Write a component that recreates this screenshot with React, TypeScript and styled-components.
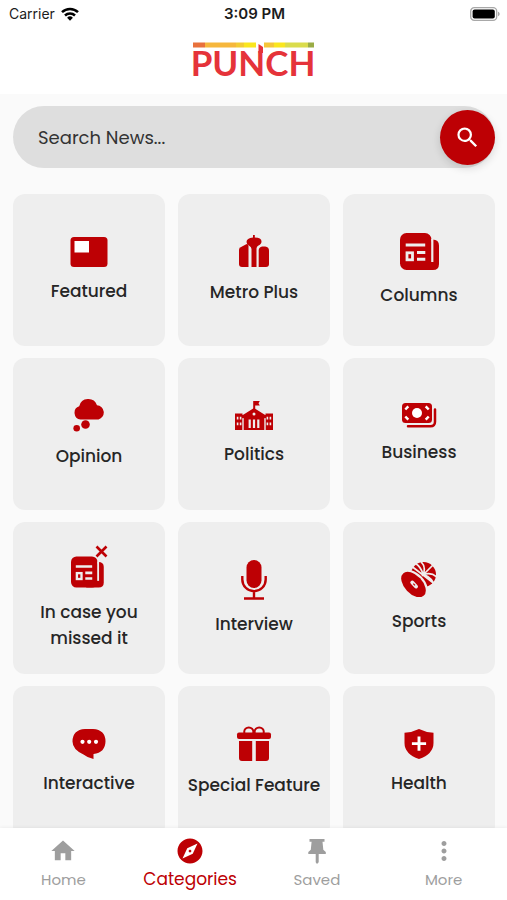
import React from "react";
import styled, { createGlobalStyle } from "styled-components";
import { MdExplore, MdMoreVert, MdSearch } from "react-icons/md";

const RED = "#bd0004";
const CARD = "#eeeeee";

const GlobalStyle = createGlobalStyle`
  *, *::before, *::after { box-sizing: border-box; }
  body { margin: 0; background: #fafafa; font-family: Poppins, Inter, sans-serif; }
  button, input { font: inherit; }
`;

const Screen = styled.div`
  display: flex;
  flex-direction: column;
  height: 100vh;
  background: #fafafa;
  color: #262626;
`;

const TopBar = styled.header`
  flex: none;
  background: #ffffff;
  padding-bottom: 8px;
`;

const StatusBar = styled.div`
  display: grid;
  grid-template-columns: 1fr auto 1fr;
  align-items: center;
  height: 28px;
  padding: 0 7px 0 9px;
  font-family: Inter, sans-serif;
  font-size: 14px;
  line-height: 20px;
  color: #1c1c1c;
`;

const Carrier = styled.span`
  display: flex;
  align-items: center;
  gap: 6px;
`;

const Clock = styled.time`
  font-weight: 600;
  font-size: 15px;
`;

const Battery = styled.span`
  display: flex;
  justify-content: flex-end;
`;

const Brand = styled.h1`
  display: flex;
  justify-content: center;
  margin: 12px 0 0;
`;

const Content = styled.main`
  flex: 1;
  min-height: 0;
  overflow-y: auto;
  scrollbar-width: none;
  padding: 12px 12px 12px 13px;
`;

const SearchForm = styled.form`
  display: flex;
  align-items: center;
  height: 62px;
  margin-bottom: 26px;
  border-radius: 31px;
  background: #dedede;
`;

const SearchInput = styled.input`
  flex: 1;
  min-width: 0;
  height: 100%;
  padding: 0 16px 0 25px;
  border: 0;
  outline: 0;
  background: transparent;
  font-size: 18px;
  color: #333333;
  &::placeholder {
    color: #333333;
    opacity: 1;
  }
`;

const SearchButton = styled.button`
  display: grid;
  place-items: center;
  flex: none;
  width: 55px;
  height: 55px;
  padding: 0;
  border: 0;
  border-radius: 50%;
  background: ${RED};
  color: #ffffff;
  box-shadow: 0 3px 8px rgba(0, 0, 0, 0.14);
  cursor: pointer;
`;

const CategoryGrid = styled.div`
  display: grid;
  grid-template-columns: repeat(3, minmax(0, 1fr));
  gap: 12px 13px;
`;

const CategoryCard = styled.a`
  display: flex;
  flex-direction: column;
  align-items: center;
  justify-content: center;
  gap: 11px;
  aspect-ratio: 1;
  border-radius: 12px;
  background: ${CARD};
  color: inherit;
  text-decoration: none;
  svg {
    display: block;
    flex: none;
  }
`;

const CategoryLabel = styled.span`
  max-width: 136px;
  font-size: 17px;
  font-weight: 500;
  line-height: 26px;
  text-align: center;
`;

const TabBar = styled.nav`
  flex: none;
  display: grid;
  grid-template-columns: repeat(4, 1fr);
  height: 72px;
  background: #ffffff;
  box-shadow: 0 -1px 3px rgba(0, 0, 0, 0.05);
`;

const Tab = styled.a<{ $active?: boolean }>`
  display: flex;
  flex-direction: column;
  align-items: center;
  padding-top: 8px;
  color: ${(p) => (p.$active ? RED : "#9e9e9e")};
  font-size: ${(p) => (p.$active ? 17 : 15)}px;
  line-height: ${(p) => (p.$active ? 26 : 28)}px;
  text-decoration: none;
`;

const TabIcon = styled.span`
  display: grid;
  place-items: center;
  height: 30px;
  svg {
    display: block;
  }
`;

type IconProps = { w: number; h: number; children: React.ReactNode };

const Icon = ({ w, h, children }: IconProps) => (
  <svg width={w} height={h} viewBox={`0 0 ${w} ${h}`} fill={RED} aria-hidden="true">
    {children}
  </svg>
);

const WifiIcon = () => (
  <svg width="18" height="14" viewBox="0 0 18 14" fill="none" stroke="#000" strokeWidth="2.5" aria-hidden="true">
    <path d="M1 5.2a11.5 11.5 0 0 1 16 0" />
    <path d="M4 8.5a7.2 7.2 0 0 1 10 0" />
    <path d="M6.1 10.7a4.2 4.2 0 0 1 5.8 0L9 13.8z" fill="#000" stroke="none" />
  </svg>
);

const BatteryIcon = () => (
  <svg width="30" height="14" viewBox="0 0 30 14" aria-hidden="true">
    <rect x=".7" y=".7" width="26" height="12.6" rx="3.6" fill="#fff" stroke="#a8a8a8" strokeWidth="1.3" />
    <rect x="2.6" y="2.5" width="22.2" height="9" rx="2" fill="#000" />
    <path d="M28 4.8c2.2.7 2.2 3.7 0 4.4z" fill="#a8a8a8" />
  </svg>
);

const PunchLogo = () => (
  <svg width="140" height="46" viewBox="-8 0 140 46" role="img" aria-label="Punch">
    <rect x="1" y="2.500" width="12" height="5" fill="#e8713c" />
    <rect x="13" y="2.500" width="31" height="5" fill="#f6b73c" />
    <rect x="44" y="2.500" width="8" height="5" fill="#f3cb35" />
    <rect x="52" y="2.500" width="12" height="5" fill="#fae61e" />
    <rect x="72" y="2.500" width="10" height="5" fill="#f5c63a" />
    <rect x="82" y="2.500" width="11" height="5" fill="#fae61e" />
    <rect x="93" y="2.500" width="23" height="5" fill="#dadc4c" />
    <rect x="116" y="2.500" width="6" height="5" fill="#9aac45" />
    <path d="M66.500 4l4.500 3v6h-4.500z" fill="#e5333a" />
    <text x="61" y="36" textAnchor="middle" fontFamily="Lato, sans-serif" fontWeight="700" fontSize="35" fill="#e5333a">
      PUNCH
    </text>
  </svg>
);

const FeaturedIcon = () => (
  <Icon w={38} h={30}>
    <rect x=".5" width="37" height="30" rx="3.500" />
    <rect x="4.500" y="4" width="14.500" height="11.500" fill="#fff" />
  </Icon>
);

const MetroIcon = () => (
  <Icon w={32} h={33}>
    <path d="M1 15q0-1.500 1.200-2.400l6-3.300q2-.8 2.300 1.500V32H4q-3 0-3-3z" />
    <path d="M15 0h1.800v2.500q6.700.2 6.700 3.700 0 3-3 4.300-2 .8-2 3V32h-5V14q-.2-2-2-3-3-1.500-3-4Q8.500 3 15 2.500z" />
    <path d="M20.700 15q.2-3 3.500-3.500h3q3.800.5 3.800 4V29q0 3-3 3h-7.300z" />
  </Icon>
);

const Newspaper = () => (
  <>
    <path d="M32.500 6.500q6.500 0 6.500 6V31q0 6-6 6H18z" />
    <rect width="31.500" height="37" rx="6.500" />
    <path d="M32.300 6v23" stroke={CARD} strokeWidth="2.200" />
    <path d="M5.700 12h19.500M17 19.500h8.300M17 26.300h8.300" stroke={CARD} strokeWidth="3" />
    <rect x="7" y="19.800" width="5.500" height="7" fill="none" stroke={CARD} strokeWidth="2.800" />
  </>
);

const ColumnsIcon = () => (
  <Icon w={39} h={38}>
    <Newspaper />
  </Icon>
);

const MissedIcon = () => (
  <Icon w={38} h={43}>
    <g transform="translate(1 11.500) scale(.84)">
      <Newspaper />
    </g>
    <path d="M26.500 1.500l10 10M36.500 1.500l-10 10" fill="none" stroke={RED} strokeWidth="2.600" />
  </Icon>
);

const OpinionIcon = () => (
  <Icon w={32} h={33}>
    <path d="M7.500 20.500A6.800 6.800 0 0 1 6.200 7.300 9.300 9.300 0 0 1 24 6.200a7.300 7.300 0 0 1 1.500 14.300z" />
    <circle cx="12.500" cy="25.500" r="4.300" />
    <circle cx="3.700" cy="29.300" r="3.300" />
  </Icon>
);

const PoliticsIcon = () => (
  <Icon w={38} h={29}>
    <path d="M18.200 0h6.600l-1.300 2.200 1.300 2.200h-4.600V9h-2z" />
    <path d="M19 7l12 7.500V17H7v-2.500zM0 12.500h7.500V29H0zM30.500 12.500H38V29h-7.500z" />
    <path d="M8.500 17h21v12h-21z" />
    <circle cx="19" cy="13" r="1.500" fill={CARD} />
    <path d="M14.700 18.500V27M19 18.500V27M23.300 18.500V27" stroke={CARD} strokeWidth="2.200" />
    <path d="M1.800 15.800h1.600v2.800H1.800zM4.800 15.800h1.600v2.800H4.800zM1.800 21.500h1.600v2.800H1.800zM4.800 21.500h1.600v2.800H4.800zM31.600 15.800h1.600v2.800h-1.600zM34.600 15.800h1.600v2.800h-1.600zM31.600 21.500h1.600v2.800h-1.600zM34.600 21.500h1.600v2.800h-1.600z" fill={CARD} />
    <path d="M8 17.500V29M30 17.500V29" stroke={CARD} strokeWidth=".8" />
  </Icon>
);

const BusinessIcon = () => (
  <Icon w={35} h={25}>
    <rect width="30" height="20" rx="3.500" />
    <circle cx="15" cy="10" r="5" fill="#fff" />
    <path d="M3.300 6.500l3-3.200M26.700 6.500l-3-3.200M3.300 13.500l3 3.200M26.700 13.500l-3 3.200" stroke="#fff" strokeWidth="2.500" />
    <path d="M33 6.500v12.300q0 4.500-4.500 4.500H6" fill="none" stroke={RED} strokeWidth="2.500" strokeLinecap="round" />
  </Icon>
);

const InterviewIcon = () => (
  <Icon w={26} h={40}>
    <rect x="5.500" width="15" height="28" rx="7.500" />
    <path d="M1.300 16v3.500a11.700 11.700 0 0 0 23.400 0V16M13 31v6.500M3 38.500h20" fill="none" stroke={RED} strokeWidth="2.400" />
  </Icon>
);

const SportsIcon = () => (
  <Icon w={36} h={35}>
    <circle cx="22.500" cy="12.500" r="12.500" />
    <path d="M9 3l26 20M21 14L34 1M20 0q5 4 2.500 12M36 15q-6-5-13-2.500M14 1q6 4 8 11M23 12.500q9 4 10 11" fill="none" stroke={CARD} strokeWidth="1.700" />
    <ellipse cx="13" cy="22" rx="17" ry="10.500" transform="rotate(47 13 22)" fill={CARD} />
    <ellipse cx="12.500" cy="22.500" rx="15.200" ry="9" transform="rotate(47 12.500 22.500)" />
    <path d="M11.300 20.500l3.700 4" stroke={CARD} strokeWidth="4" strokeLinecap="round" />
    <path d="M12.300 21.600l1.700 1.800" stroke={RED} strokeWidth="1.200" />
  </Icon>
);

const InteractiveIcon = () => (
  <Icon w={34} h={30}>
    <path d="M13 0h8q12.500.8 12.500 12.500-.3 11-12 12.500v5q-6-1.200-10-4.500Q.5 20.500.5 12.500.5.800 13 0z" />
    <circle cx="10.500" cy="12.800" r="2.100" fill="#fff" />
    <circle cx="17.200" cy="12.800" r="2.100" fill="#fff" />
    <circle cx="24" cy="12.800" r="2.100" fill="#fff" />
  </Icon>
);

const GiftIcon = () => (
  <Icon w={36} h={35}>
    <circle cx="12.800" cy="6" r="4.600" fill="none" stroke={RED} strokeWidth="2" />
    <circle cx="23.200" cy="6" r="4.600" fill="none" stroke={RED} strokeWidth="2" />
    <rect x="1" y="6.500" width="34" height="6.500" rx="2" />
    <path d="M3 15h13.200v20H6q-3 0-3-3zM19.800 15H33v17q0 3-3 3H19.800z" />
  </Icon>
);

const HealthIcon = () => (
  <Icon w={30} h={30}>
    <path d="M15 0q7 3.500 14.500 3.700V14q0 11-14.500 16Q.5 25 .5 14V3.700Q8 3.500 15 0z" />
    <path d="M15 7.500v14.200M7.900 14.600h14.200" stroke="#fff" strokeWidth="2.900" />
  </Icon>
);

const HomeIcon = () => (
  <svg width="28" height="28" viewBox="0 0 24 24" fill="currentColor" aria-hidden="true">
    <path d="M10 20v-6h4v6h5v-8h3L12 3 2 12h3v8z" />
  </svg>
);

const PinIcon = () => (
  <svg width="28" height="28" viewBox="0 0 28 28" fill="currentColor" aria-hidden="true">
    <path d="M6.500 2h15v2.700h-2l.8 8.100 2.500 2.200v2h-7.100v8.200L14 27l-1.300-1.800V17H5.300v-2l2.500-2.200.8-8.100H6.500z" />
  </svg>
);

const categories = [
  { label: "Featured", Glyph: FeaturedIcon },
  { label: "Metro Plus", Glyph: MetroIcon },
  { label: "Columns", Glyph: ColumnsIcon },
  { label: "Opinion", Glyph: OpinionIcon },
  { label: "Politics", Glyph: PoliticsIcon },
  { label: "Business", Glyph: BusinessIcon },
  { label: "In case you missed it", Glyph: MissedIcon },
  { label: "Interview", Glyph: InterviewIcon },
  { label: "Sports", Glyph: SportsIcon },
  { label: "Interactive", Glyph: InteractiveIcon },
  { label: "Special Feature", Glyph: GiftIcon },
  { label: "Health", Glyph: HealthIcon },
];

const tabs = [
  { label: "Home", glyph: <HomeIcon />, active: false },
  { label: "Categories", glyph: <MdExplore size={30} />, active: true },
  { label: "Saved", glyph: <PinIcon />, active: false },
  { label: "More", glyph: <MdMoreVert size={30} />, active: false },
];

export default function App() {
  return (
    <>
      <GlobalStyle />
      <Screen>
        <TopBar>
          <StatusBar>
            <Carrier>
              Carrier <WifiIcon />
            </Carrier>
            <Clock>3:09 PM</Clock>
            <Battery>
              <BatteryIcon />
            </Battery>
          </StatusBar>
          <Brand>
            <PunchLogo />
          </Brand>
        </TopBar>
        <Content>
          <SearchForm role="search" onSubmit={(e) => e.preventDefault()}>
            <SearchInput type="text" aria-label="Search News" placeholder="Search News..." />
            <SearchButton type="submit" aria-label="Search">
              <MdSearch size={27} />
            </SearchButton>
          </SearchForm>
          <CategoryGrid>
            {categories.map(({ label, Glyph }) => (
              <CategoryCard key={label} href="#">
                <Glyph />
                <CategoryLabel>{label}</CategoryLabel>
              </CategoryCard>
            ))}
          </CategoryGrid>
        </Content>
        <TabBar aria-label="Main">
          {tabs.map(({ label, glyph, active }) => (
            <Tab key={label} href="#" $active={active} aria-current={active ? "page" : undefined}>
              <TabIcon>{glyph}</TabIcon>
              {label}
            </Tab>
          ))}
        </TabBar>
      </Screen>
    </>
  );
}
